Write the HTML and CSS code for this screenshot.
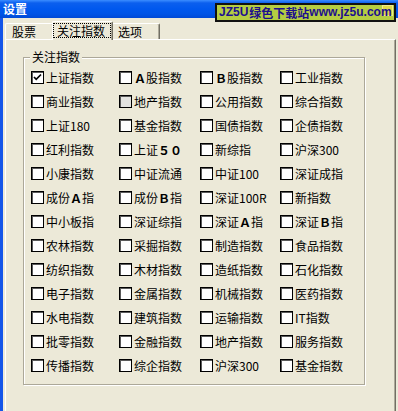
FILE: index.html
```html
<!DOCTYPE html>
<html lang="zh-CN">
<head>
<meta charset="utf-8">
<title>设置</title>
<link rel="stylesheet" href="styles.css">
</head>
<body>
<div class="window">
  <div class="titlebar">设置</div>
  <div class="client">
    <div class="tabs">
      <div class="tab tab-first">股票</div>
      <div class="tab tab-active"><span class="focus">关注指数</span></div>
      <div class="tab">选项</div>
    </div>
    <div class="panel">
      <div class="group">
        <div class="legend">关注指数</div>
        <div class="grid">
          <div class="cb"><span class="box checked"><svg width="11" height="11" viewBox="0 0 11 11"><path d="M2 5 L4.2 7.3 L9 2.5" fill="none" stroke="#000" stroke-width="1.7"/></svg></span><span>上证指数</span></div>
          <div class="cb"><span class="box"></span><span><b>Ａ</b>股指数</span></div>
          <div class="cb"><span class="box"></span><span><b class="serif">Ｂ</b>股指数</span></div>
          <div class="cb"><span class="box"></span><span>工业指数</span></div>

          <div class="cb"><span class="box"></span><span>商业指数</span></div>
          <div class="cb"><span class="box grey"></span><span>地产指数</span></div>
          <div class="cb"><span class="box"></span><span>公用指数</span></div>
          <div class="cb"><span class="box"></span><span>综合指数</span></div>

          <div class="cb"><span class="box"></span><span>上证180</span></div>
          <div class="cb"><span class="box"></span><span>基金指数</span></div>
          <div class="cb"><span class="box"></span><span>国债指数</span></div>
          <div class="cb"><span class="box"></span><span>企债指数</span></div>

          <div class="cb"><span class="box"></span><span>红利指数</span></div>
          <div class="cb"><span class="box"></span><span>上证<b>５０</b></span></div>
          <div class="cb"><span class="box"></span><span>新综指</span></div>
          <div class="cb"><span class="box"></span><span>沪深300</span></div>

          <div class="cb"><span class="box"></span><span>小康指数</span></div>
          <div class="cb"><span class="box"></span><span>中证流通</span></div>
          <div class="cb"><span class="box"></span><span>中证100</span></div>
          <div class="cb"><span class="box"></span><span>深证成指</span></div>

          <div class="cb"><span class="box"></span><span>成份<b>Ａ</b>指</span></div>
          <div class="cb"><span class="box"></span><span>成份<b class="serif">Ｂ</b>指</span></div>
          <div class="cb"><span class="box"></span><span>深证100R</span></div>
          <div class="cb"><span class="box"></span><span>新指数</span></div>

          <div class="cb"><span class="box"></span><span>中小板指</span></div>
          <div class="cb"><span class="box"></span><span>深证综指</span></div>
          <div class="cb"><span class="box"></span><span>深证<b>Ａ</b>指</span></div>
          <div class="cb"><span class="box"></span><span>深证<b class="serif">Ｂ</b>指</span></div>

          <div class="cb"><span class="box"></span><span>农林指数</span></div>
          <div class="cb"><span class="box"></span><span>采掘指数</span></div>
          <div class="cb"><span class="box"></span><span>制造指数</span></div>
          <div class="cb"><span class="box"></span><span>食品指数</span></div>

          <div class="cb"><span class="box"></span><span>纺织指数</span></div>
          <div class="cb"><span class="box"></span><span>木材指数</span></div>
          <div class="cb"><span class="box"></span><span>造纸指数</span></div>
          <div class="cb"><span class="box"></span><span>石化指数</span></div>

          <div class="cb"><span class="box"></span><span>电子指数</span></div>
          <div class="cb"><span class="box"></span><span>金属指数</span></div>
          <div class="cb"><span class="box"></span><span>机械指数</span></div>
          <div class="cb"><span class="box"></span><span>医药指数</span></div>

          <div class="cb"><span class="box"></span><span>水电指数</span></div>
          <div class="cb"><span class="box"></span><span>建筑指数</span></div>
          <div class="cb"><span class="box"></span><span>运输指数</span></div>
          <div class="cb"><span class="box"></span><span>IT指数</span></div>

          <div class="cb"><span class="box"></span><span>批零指数</span></div>
          <div class="cb"><span class="box"></span><span>金融指数</span></div>
          <div class="cb"><span class="box"></span><span>地产指数</span></div>
          <div class="cb"><span class="box"></span><span>服务指数</span></div>

          <div class="cb"><span class="box"></span><span>传播指数</span></div>
          <div class="cb"><span class="box"></span><span>综企指数</span></div>
          <div class="cb"><span class="box"></span><span>沪深300</span></div>
          <div class="cb"><span class="box"></span><span>基金指数</span></div>
        </div>
      </div>
    </div>
  </div>
  <div class="watermark"><span class="wm-btn"></span><span class="wm-lat">JZ5U</span><span class="wm-cn">绿色下载站</span><span class="wm-lat">www.jz5u.com</span></div>
</div>
</body>
</html>
```

FILE: styles.css
```css
html, body {
  margin: 0;
  padding: 0;
  width: 398px;
  height: 411px;
  overflow: hidden;
  background: #ECE9D8;
}

body {
  font-family: "Noto Sans CJK SC", "Liberation Sans", sans-serif;
  font-size: 12px;
  color: #000;
}

.window {
  position: relative;
  width: 398px;
  height: 411px;
  display: flex;
  flex-direction: column;
}

.titlebar {
  height: 18px;
  line-height: 18px;
  padding-left: 3px;
  color: #fff;
  font-weight: bold;
  font-size: 12px;
  background: linear-gradient(to bottom, #3B8DFF 0px, #0B5FEE 3px, #0058EE 9px, #0054E6 14px, #0049D6 18px);
}

.client {
  flex: 1;
  display: flex;
  flex-direction: column;
  border-left: 3px solid #1455E8;
}

.tabs {
  height: 21px;
  display: flex;
  align-items: flex-end;
  padding-left: 2px;
}

.tab {
  box-sizing: border-box;
  height: 16px;
  width: 49px;
  line-height: 15px;
  padding-left: 6px;
  border-top: 1px solid #fff;
  border-left: 1px solid #fff;
  border-right: 1px solid #716F64;
  border-radius: 2px 2px 0 0;
  box-shadow: inset -1px 0 0 #ACA899;
  background: #ECE9D8;
}

.tab-active {
  position: relative;
  z-index: 1;
  width: 61px;
  height: 19px;
  margin: 0 -2px -1px -2px;
  padding: 0;
}

.focus {
  display: block;
  height: 15px;
  line-height: 14px;
  margin: 1px 1px 0 0;
  padding-left: 3px;
  border: 1px dotted #000;
  box-sizing: border-box;
}

.panel {
  flex: 1;
  box-sizing: border-box;
  width: 391px;
  margin-left: 2px;
  border-top: 1px solid #fff;
  border-left: 1px solid #fff;
  border-right: 1px solid #716F64;
  box-shadow: inset -1px 0 0 #ACA899;
  padding-top: 17px;
  padding-left: 17px;
}

.group {
  box-sizing: border-box;
  width: 342px;
  border: 1px solid #ACA899;
  box-shadow: inset 1px 1px 0 #fff, 1px 1px 0 #fff;
  padding: 0 0 6px 7px;
}

.legend {
  width: fit-content;
  margin: -8px 0 2px -1px;
  padding: 0 2px;
  height: 14px;
  line-height: 14px;
  background: #ECE9D8;
}

.grid {
  display: grid;
  grid-template-columns: 88px 81px 80px 1fr;
  grid-auto-rows: 24px;
}

.cb {
  display: flex;
  align-items: flex-start;
  line-height: 23px;
  white-space: nowrap;
}

.box {
  box-sizing: border-box;
  width: 13px;
  height: 13px;
  margin-top: 5px;
  margin-right: 2px;
  border: 1px solid #000;
  box-shadow: inset 1px 1px 0 #5a5a5a;
  background: #fff;
  flex: none;
  display: flex;
}

.box svg {
  display: block;
}

.box.grey {
  background: #E3E3E0;
}

.cb b {
  font-weight: bold;
}

.cb b.serif {
  font-family: "Liberation Serif", "Noto Sans CJK SC", serif;
}

.watermark {
  position: absolute;
  top: 3px;
  left: 215px;
  width: 181px;
  height: 19px;
  box-sizing: border-box;
  border: 2px solid #111;
  background: #B5CD42;
  color: #1D0F8E;
  font-weight: bold;
  display: flex;
  align-items: center;
  padding-left: 2px;
  white-space: nowrap;
  overflow: hidden;
}

.wm-cn {
  position: relative;
  font-size: 12px;
  line-height: 15px;
  margin-left: 1px;
}

.wm-lat {
  position: relative;
  font-family: "Liberation Sans", sans-serif;
  font-size: 12px;
  line-height: 15px;
}

.wm-btn {
  position: absolute;
  right: 1px;
  top: 0px;
  width: 11px;
  height: 11px;
  background: #E2D84A;
  box-shadow: inset 0 0 0 1px #F2EC8C;
}
```
